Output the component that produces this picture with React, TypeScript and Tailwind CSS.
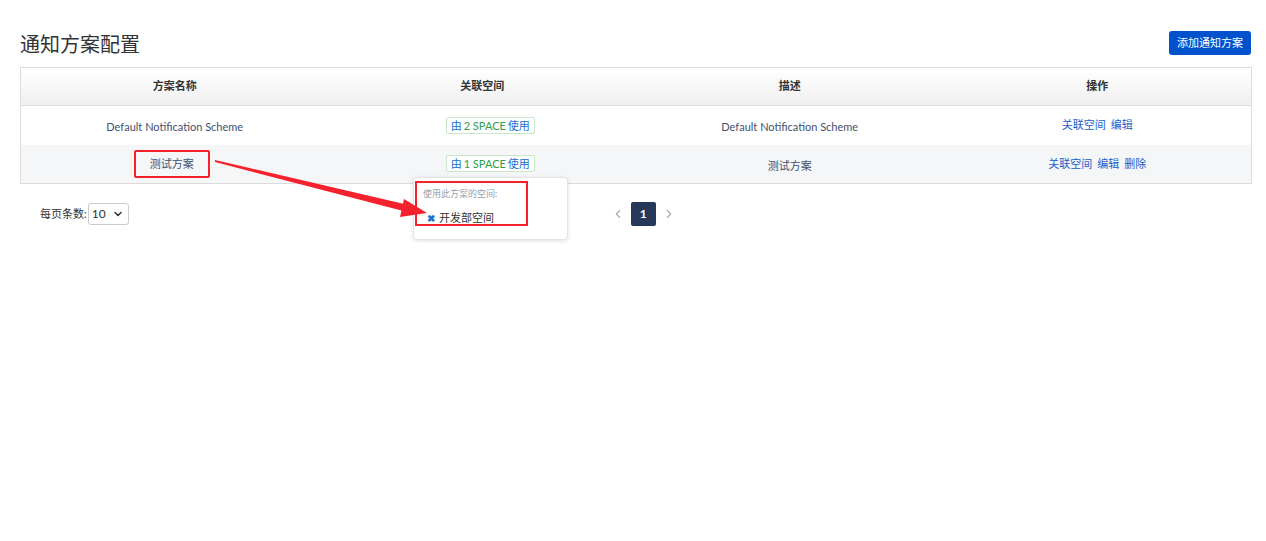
import { ChevronDown, ChevronLeft, ChevronRight } from 'lucide-react';

const font = { fontFamily: 'Lato, "Noto Sans CJK SC", sans-serif' };

const rows = [
  { name: 'Default Notification Scheme', count: 2, desc: 'Default Notification Scheme', actions: ['关联空间', '编辑'] },
  { name: '测试方案', count: 1, desc: '测试方案', actions: ['关联空间', '编辑', '删除'] },
];

function Badge({ count }: { count: number }) {
  return (
    <span className="inline-flex items-center gap-[2px] h-[17px] ml-[16px] px-[4px] border border-[#c8e6c9] rounded-[2px] text-[11px] leading-none bg-white">
      <span className="text-[#1a6fd1]">由</span>
      <span className="text-[#2e9e46]">{count} SPACE</span>
      <span className="text-[#1a6fd1]">使用</span>
    </span>
  );
}

export default function App() {
  return (
    <div className="relative w-[1266px] h-[541px] bg-white text-[#42526e]" style={font}>
      {/* Header */}
      <div className="flex items-center justify-between pl-5 pr-[15px] pt-[29px] pb-[11px]">
        <h1 className="text-[20px] leading-6 text-[#333] mt-[3px]">通知方案配置</h1>
        <button className="h-6 px-[8px] rounded-[3px] bg-[#0052cc] text-white text-[11px] leading-6">
          添加通知方案
        </button>
      </div>

      {/* Table */}
      <div className="ml-5 mr-[14px] border border-[#dcdcdc]">
        <div className="grid grid-cols-4 h-[38px] items-center bg-gradient-to-b from-white to-[#f0f0f0] border-b border-[#dcdcdc] text-[11px] font-bold text-[#333]">
          <div className="text-center">方案名称</div>
          <div className="text-center">关联空间</div>
          <div className="text-center">描述</div>
          <div className="text-center">操作</div>
        </div>
        {rows.map((r, i) => (
          <div
            key={r.name}
            className={`grid grid-cols-4 items-center text-[11px] ${i === 0 ? 'h-[39px] bg-white' : 'h-[38px] bg-[#f5f6f8]'}`}
          >
            <div className="text-center">
              {i === 1 ? (
                <span className="relative right-[3px] inline-block px-[14px] py-[5px] border-2 border-[#f5222d] rounded-[2px] leading-[14px]">
                  {r.name}
                </span>
              ) : (
                <span className="relative top-[2px]">{r.name}</span>
              )}
            </div>
            <div className="text-center">
              <Badge count={r.count} />
            </div>
            <div className="text-center">
              <span className="relative top-[2px]">{r.desc}</span>
            </div>
            <div className="flex justify-center gap-[5px] text-[#1a5fcc]">
              {r.actions.map((a) => (
                <a key={a} href="#" className="hover:underline">{a}</a>
              ))}
            </div>
          </div>
        ))}
      </div>

      {/* Footer: page size + pagination */}
      <div className="flex items-center mt-[18px] pl-[40px]">
        <span className="text-[11px] text-[#333]">每页条数:</span>
        <div className="ml-[1px] flex items-center gap-[6px] h-[22px] pl-[3px] pr-[4px] border border-[#ccc] rounded-[3px] text-[12px] text-[#333]">
          10
          <ChevronDown className="w-[12px] h-[12px] stroke-[3]" />
        </div>
        <div className="ml-[482px] flex items-center gap-[6px] text-[#a5adba]">
          <ChevronLeft className="w-[14px] h-[14px]" />
          <span className="w-[25px] h-[24px] rounded-[2px] bg-[#253858] text-white text-[12px] font-bold flex items-center justify-center">
            1
          </span>
          <ChevronRight className="w-[14px] h-[14px]" />
        </div>
      </div>

      {/* Popover */}
      <div className="absolute left-[413px] top-[177px] w-[155px] h-[63px] bg-white border border-[#e2e4e8] rounded-[4px] shadow-[0_1px_4px_rgba(0,0,0,0.12)]">
        <div className="absolute left-[1px] top-[3px] w-[113px] h-[45px] border-2 border-[#f5222d]" />
        <div className="pl-[9px] pt-[9px] text-[9px] text-[#97a0af]">使用此方案的空间:</div>
        <div className="flex items-center gap-[4px] pl-[13px] mt-[9px] text-[11px] text-[#333]">
          <span className="text-[#1a6fd1] text-[10px] font-bold leading-none">✖</span>
          开发部空间
        </div>
      </div>

      {/* Annotation arrow */}
      <svg className="absolute left-0 top-0 pointer-events-none" width="1266" height="541">
        <polygon points="215,160 413,206 411,213 215,162" fill="#f5222d" />
        <polygon points="404,199 427,213 400,217" fill="#f5222d" />
      </svg>
    </div>
  );
}
